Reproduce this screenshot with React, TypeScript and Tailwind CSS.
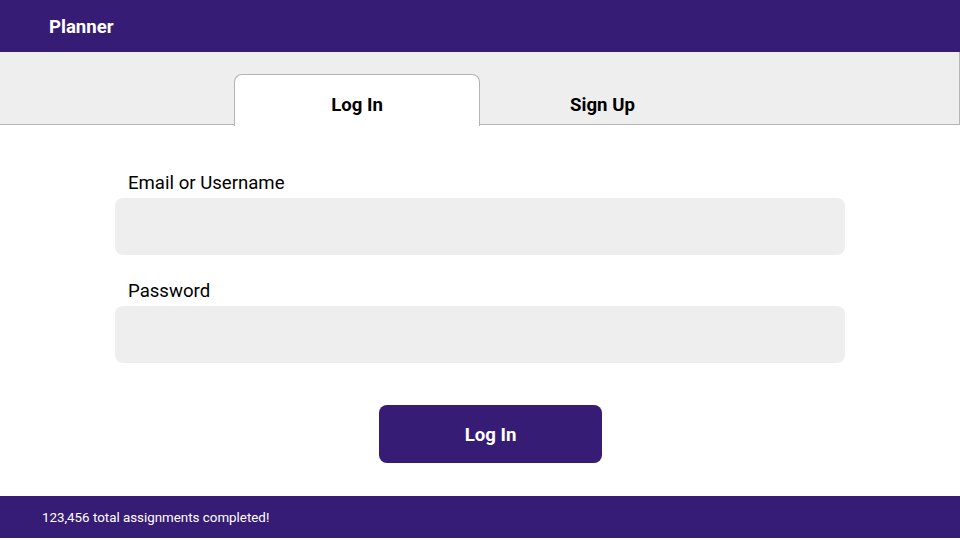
export default function App() {
  return (
    <div className="flex h-[538px] w-[960px] flex-col bg-white font-['Roboto',sans-serif] text-black">
      <header className="flex h-[52px] shrink-0 items-center bg-[#361c75] pt-[3px] pl-[49px]">
        <span className="text-[18.6px] font-bold text-white">Planner</span>
      </header>

      <nav className="flex h-[73px] shrink-0 items-end border-r border-b border-[#b5b5b5] bg-[#eeeeee] pl-[234px]">
        <button className="relative -mb-[2px] flex h-[52px] w-[246px] items-start justify-center rounded-t-[8px] border border-b-0 border-[#b5b5b5] bg-white pt-[19px] text-[18.6px] leading-[22px] font-bold">
          Log In
        </button>
        <button className="flex h-[52px] w-[245px] items-start justify-center pt-[22px] text-[18.6px] leading-[22px] font-bold">
          Sign Up
        </button>
      </nav>

      <main className="flex flex-1 flex-col px-[115px] pt-[45px]">
        <label className="pt-[1px] pl-[13px] text-[18.6px] leading-[24px]">Email or Username</label>
        <input className="mt-[3px] h-[57px] w-[730px] rounded-[8px] bg-[#eeeeee] px-4 outline-none" />

        <label className="mt-[23px] pt-[1px] pl-[13px] text-[18.6px] leading-[24px]">Password</label>
        <input
          type="password"
          className="mt-[3px] h-[57px] w-[730px] rounded-[8px] bg-[#eeeeee] px-4 outline-none"
        />

        <button className="mt-[42px] ml-[264px] h-[58px] w-[223px] rounded-[8px] bg-[#361c75] pt-[4px] text-[18.6px] font-bold text-white">
          Log In
        </button>
      </main>

      <footer className="flex h-[42px] shrink-0 items-center bg-[#361c75] pt-[2px] pl-[42px]">
        <span className="text-[13.35px] text-white">123,456 total assignments completed!</span>
      </footer>
    </div>
  )
}
